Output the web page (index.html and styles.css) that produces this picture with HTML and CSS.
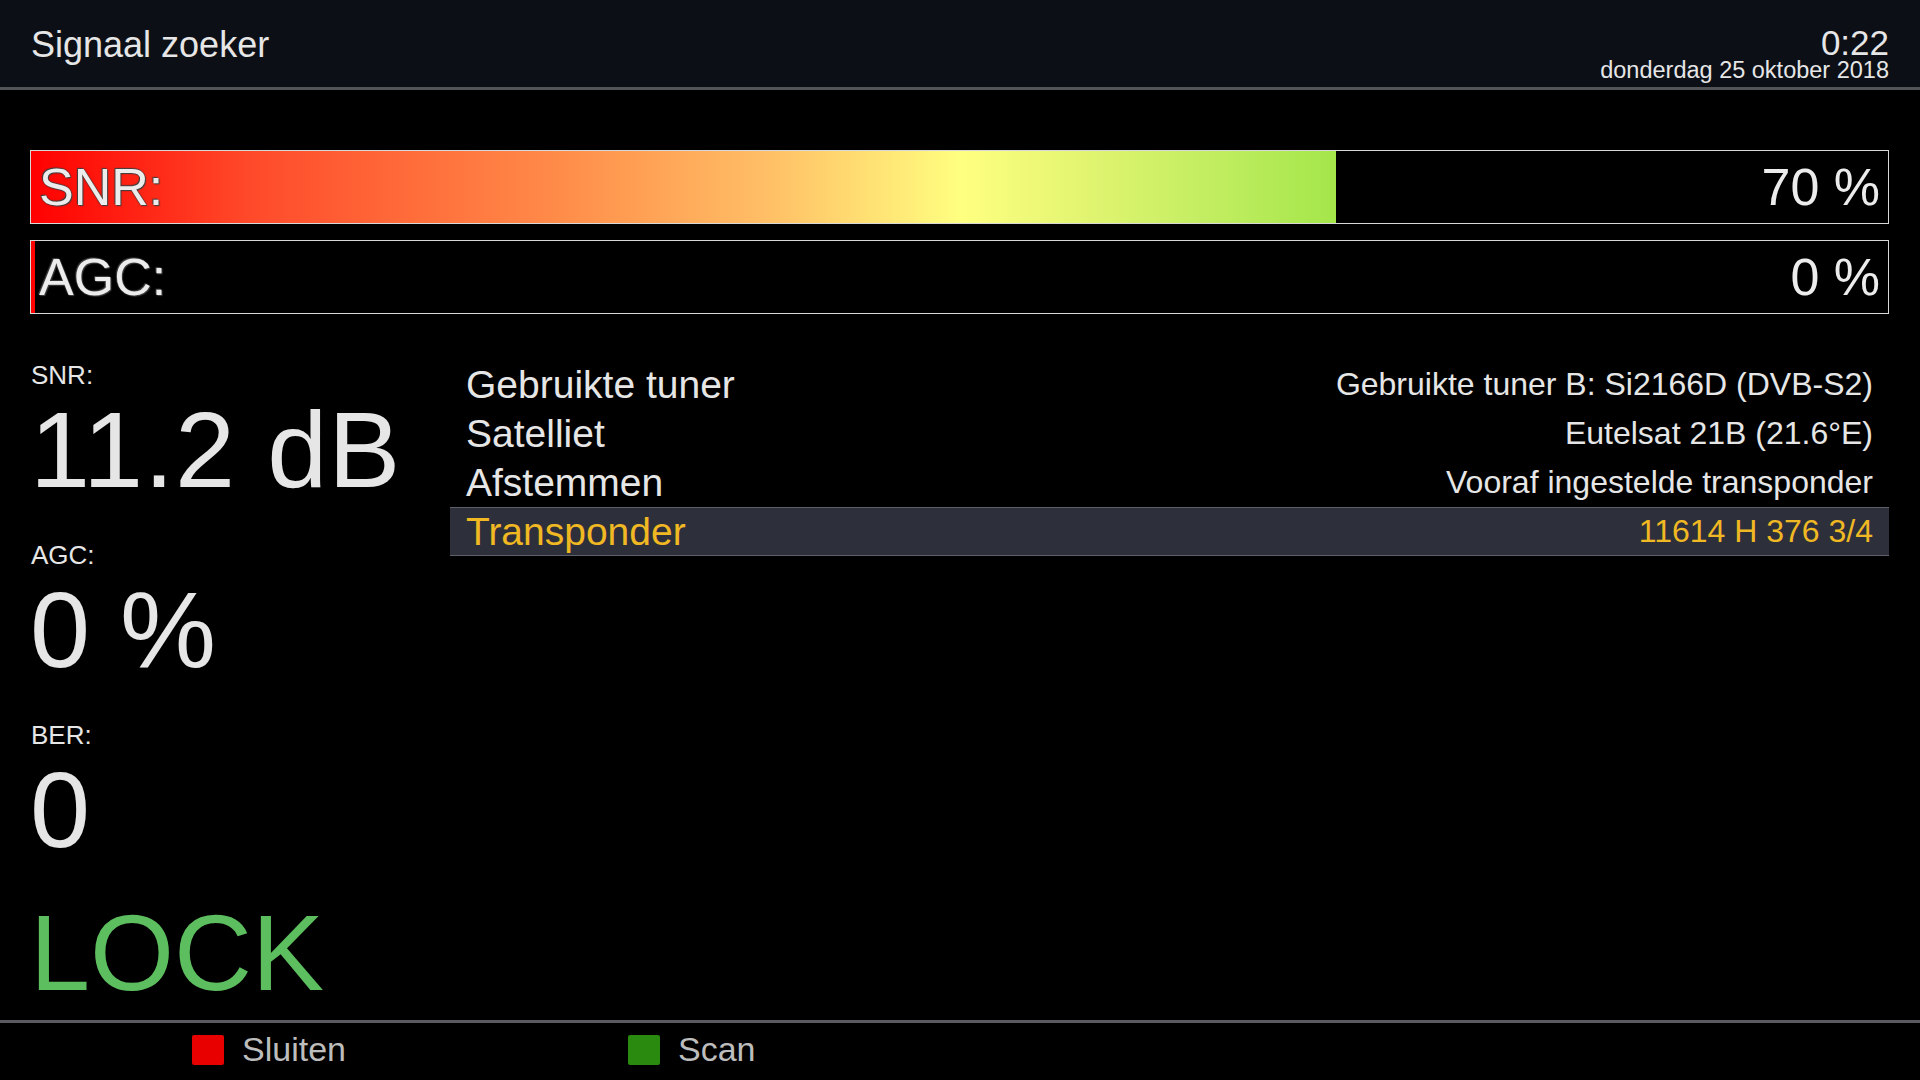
FILE: index.html
```html
<!DOCTYPE html>
<html lang="nl">
<head>
  <meta charset="UTF-8">
  <meta name="viewport" content="width=device-width, initial-scale=1.0">
  <title>Signaal zoeker</title>
  <link rel="stylesheet" href="styles.css">
</head>
<body>
  <div class="screen">
    <header class="topbar">
      <div class="title">Signaal zoeker</div>
      <div class="clock">
        <div class="clock-time">0:22</div>
        <div class="clock-date">donderdag 25 oktober 2018</div>
      </div>
    </header>

    <main class="content">
      <div class="bars">
        <div class="bar">
          <div class="bar-fill" style="width: 70.3%"></div>
          <span class="bar-label">SNR:</span>
          <span class="bar-value">70 %</span>
        </div>
        <div class="bar">
          <div class="bar-fill" style="width: 0%"></div>
          <span class="bar-label">AGC:</span>
          <span class="bar-value">0 %</span>
        </div>
      </div>

      <div class="lower">
        <div class="stats">
          <div class="stat">
            <div class="stat-label">SNR:</div>
            <div class="stat-value wide">11.2 dB</div>
          </div>
          <div class="stat">
            <div class="stat-label">AGC:</div>
            <div class="stat-value">0 %</div>
          </div>
          <div class="stat">
            <div class="stat-label">BER:</div>
            <div class="stat-value">0</div>
          </div>
          <div class="lock">LOCK</div>
        </div>

        <ul class="info">
          <li class="info-row">
            <span class="info-name">Gebruikte tuner</span>
            <span class="info-value">Gebruikte tuner B: Si2166D (DVB-S2)</span>
          </li>
          <li class="info-row">
            <span class="info-name">Satelliet</span>
            <span class="info-value">Eutelsat 21B (21.6°E)</span>
          </li>
          <li class="info-row">
            <span class="info-name">Afstemmen</span>
            <span class="info-value">Vooraf ingestelde transponder</span>
          </li>
          <li class="info-row selected">
            <span class="info-name">Transponder</span>
            <span class="info-value">11614 H 376 3/4</span>
          </li>
        </ul>
      </div>
    </main>

    <footer class="buttons">
      <div class="button"><span class="key key-red"></span>Sluiten</div>
      <div class="button"><span class="key key-green"></span>Scan</div>
    </footer>
  </div>
</body>
</html>
```

FILE: styles.css
```css
body {
  margin: 0;
  padding: 0;
  background-color: #000;
  color: #e6e6e6;
  font-family: "Liberation Sans", Arial, sans-serif;
}

.screen {
  display: flex;
  flex-direction: column;
  width: 1920px;
  height: 1080px;
  overflow: hidden;
}

/* header */
.topbar {
  display: flex;
  justify-content: space-between;
  align-items: flex-start;
  height: 87px;
  padding: 0 31px;
  background-color: #0c0f16;
  border-bottom: 3px solid #535458;
}

.title {
  font-size: 36px;
  line-height: 90px;
}

.clock {
  margin-top: 28px;
  text-align: right;
}

.clock-time {
  font-size: 35px;
  line-height: 30px;
}

.clock-date {
  font-size: 23.5px;
  line-height: 24px;
}

/* content */
.content {
  flex: 1;
  padding: 60px 31px 0 30px;
}

.bars {
  display: flex;
  flex-direction: column;
  gap: 16px;
}

.bar {
  position: relative;
  display: flex;
  justify-content: space-between;
  align-items: center;
  height: 72px;
  padding: 0 8px;
  border: 1px solid #d8d8d8;
  background-color: #000;
}

.bar-fill {
  position: absolute;
  top: 0;
  left: 0;
  bottom: 0;
  min-width: 4px;
  background: linear-gradient(to right,
    #ff0000 0px,
    #ff4a2a 220px,
    #ff8a48 520px,
    #ffc066 740px,
    #ffff80 930px,
    #e0f470 1060px,
    #c4ee62 1170px,
    #a4e64a 1306px,
    #80dc30 1856px);
  background-size: 1856px 100%;
  background-repeat: no-repeat;
}

.bar-label,
.bar-value {
  position: relative;
  font-size: 52px;
  line-height: 72px;
  color: #ececec;
}

.bar-label {
  text-shadow: 0 0 2px #333, 1px 1px 1px #444, -1px -1px 1px #444;
}

.lower {
  display: flex;
  margin-top: 44px;
}

.stats {
  width: 420px;
  flex-shrink: 0;
}

.stat {
  margin-bottom: 37px;
}

.stat-label {
  margin: 2px 0 0 1px;
  font-size: 26px;
  line-height: 30px;
}

.stat-value {
  margin-top: 7px;
  font-size: 108px;
  line-height: 106px;
}

.stat-value.wide {
  letter-spacing: 1px;
}

.lock {
  margin-top: 28px;
  font-size: 108px;
  line-height: 106px;
  color: #5cbe5e;
}

.info {
  flex: 1;
  list-style: none;
  margin: 2px 0 0 0;
  padding: 0;
}

.info-row {
  display: flex;
  justify-content: space-between;
  align-items: center;
  height: 49px;
  padding: 0 16px;
  box-sizing: border-box;
}

.info-name {
  font-size: 39px;
  line-height: 49px;
}

.info-value {
  font-size: 32px;
  line-height: 49px;
}

.info-row.selected {
  background-color: #2d303b;
  border-top: 1px solid #5d6068;
  border-bottom: 1px solid #5d6068;
  color: #f0b823;
}

.info-row.selected .info-name,
.info-row.selected .info-value {
  line-height: 47px;
}

/* footer */
.buttons {
  display: flex;
  align-items: center;
  height: 60px;
  padding: 0 0 4px 192px;
  border-top: 3px solid #5a5b60;
  box-sizing: border-box;
}

.button {
  display: flex;
  align-items: center;
  gap: 18px;
  width: 436px;
  font-size: 34px;
  color: #bdbdbd;
}

.key {
  width: 32px;
  height: 30px;
  border-radius: 2px;
}

.key-red {
  background-color: #e80000;
}

.key-green {
  background-color: #2a8a10;
}
```
